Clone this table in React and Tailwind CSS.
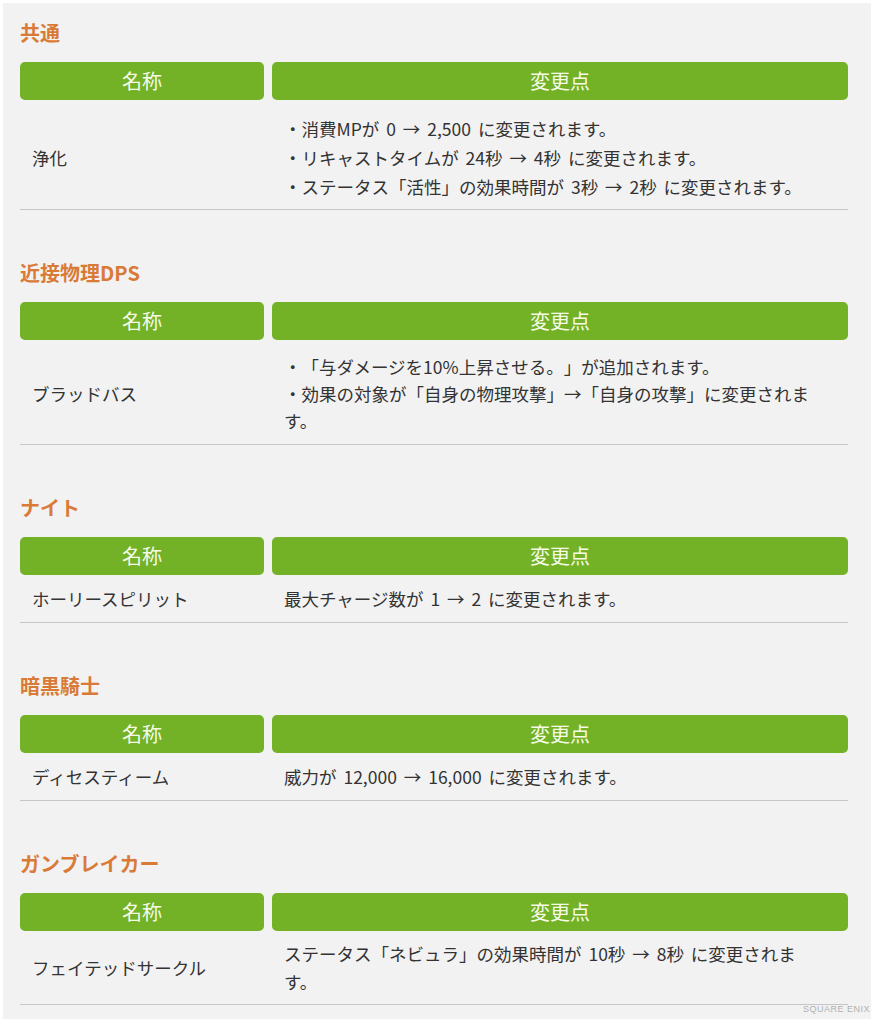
const font = { fontFamily: '"Noto Sans CJK JP", "Noto Sans", sans-serif' };

const sections = [
  {
    title: "共通",
    name: "浄化",
    lines: [
      "・消費MPが 0 → 2,500 に変更されます。",
      "・リキャストタイムが 24秒 → 4秒 に変更されます。",
      "・ステータス「活性」の効果時間が 3秒 → 2秒 に変更されます。",
    ],
    row: "pt-[14px] pb-[8px] leading-[29px]",
  },
  {
    title: "近接物理DPS",
    name: "ブラッドバス",
    lines: [
      "・「与ダメージを10%上昇させる。」が追加されます。",
      "・効果の対象が「自身の物理攻撃」→「自身の攻撃」に変更されます。",
    ],
    row: "pt-[13px] pb-[10px] leading-[27px]",
  },
  {
    title: "ナイト",
    name: "ホーリースピリット",
    lines: ["最大チャージ数が 1 → 2 に変更されます。"],
    row: "pt-[10px] pb-[10px] leading-[27px]",
  },
  {
    title: "暗黒騎士",
    name: "ディセスティーム",
    lines: ["威力が 12,000 → 16,000 に変更されます。"],
    row: "pt-[10px] pb-[10px] leading-[27px]",
  },
  {
    title: "ガンブレイカー",
    name: "フェイテッドサークル",
    lines: ["ステータス「ネビュラ」の効果時間が 10秒 → 8秒 に変更されます。"],
    row: "pt-[9px] pb-[8px] leading-[28px]",
  },
];

const Section = ({ s, first }) => (
  <section className={first ? "" : "mt-[49px]"}>
    <h2 className="h-[28px] leading-[28px] text-[20px] font-bold text-[#d97a37] mb-[15px]">{s.title}</h2>

    {/* header */}
    <div className="w-[828px] grid grid-cols-[244px_576px] gap-x-2">
      <div className="h-[38px] rounded-[5px] bg-[#73b126] text-[#f6fbe8] text-[20px] flex items-center justify-center">
        名称
      </div>
      <div className="h-[38px] rounded-[5px] bg-[#73b126] text-[#f6fbe8] text-[20px] flex items-center justify-center">
        変更点
      </div>
    </div>

    {/* row */}
    <div className="w-[828px] grid grid-cols-[244px_584px] border-b border-[#c6c6c6] text-[17.5px] text-[#333] [word-spacing:3px] [text-spacing-trim:space-all]">
      <div className={`flex items-center pl-3 ${s.row}`}>{s.name}</div>
      <div className={`pl-[20px] pr-[34px] ${s.row}`}>
        {s.lines.map((l) => (
          <p key={l}>{l}</p>
        ))}
      </div>
    </div>
  </section>
);

export default function App() {
  return (
    <div style={font} className="w-[876px] h-[1024px] bg-white pt-[3px] pl-[3px] pr-[5px] pb-[5px]">
      <div className="relative h-full bg-[#f2f2f2] pt-[16px] pl-[17px]">
        {sections.map((s, i) => (
          <Section key={s.title} s={s} first={i === 0} />
        ))}

        <span
          style={{ fontFamily: '"Liberation Sans", sans-serif' }}
          className="absolute right-[1px] bottom-[3px] text-[9px] tracking-[0.5px] text-[#b0b0b0]"
        >
          SQUARE ENIX
        </span>
      </div>
    </div>
  );
}
